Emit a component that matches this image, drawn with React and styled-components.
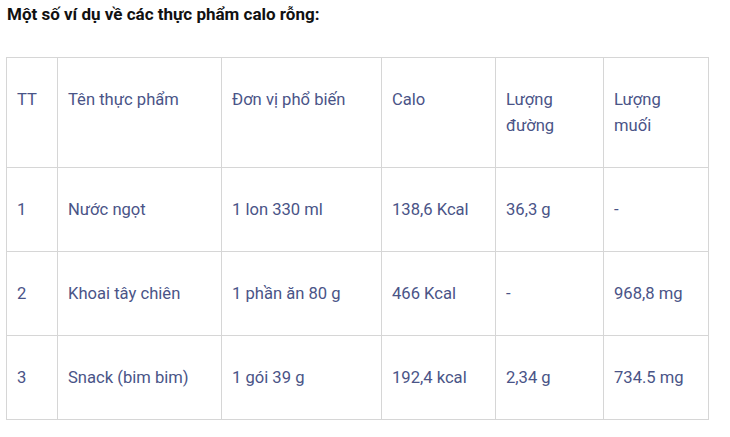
import React from "react";
import styled, { createGlobalStyle } from "styled-components";

const GlobalStyle = createGlobalStyle`
	body {
		margin: 0;
		background: #ffffff;
		font-family: Roboto, "Noto Sans", "Liberation Sans", sans-serif;
	}
`;

const Page = styled.div`
	padding: 2px 6px 0;
`;

const Title = styled.p`
	margin: 0 0 31px 1px;
	font-size: 17px;
	line-height: 24px;
	font-weight: 700;
	color: #111111;
`;

const Table = styled.table`
	width: 702px;
	border-collapse: collapse;
	table-layout: fixed;
	color: #4a5487;
	font-size: 16.6px;
	line-height: 26px;
`;

const Cell = styled.td`
	border: 1px solid #d6d6d6;
	padding: 29px 10px 28px;
	vertical-align: top;
	text-align: left;
	font-weight: 400;
`;

const columns = [51, 164, 160, 114, 108, 105];

const header = ["TT", "Tên thực phẩm", "Đơn vị phổ biến", "Calo", "Lượng đường", "Lượng muối"];

const rows = [
	["1", "Nước ngọt", "1 lon 330 ml", "138,6 Kcal", "36,3 g", "-"],
	["2", "Khoai tây chiên", "1 phần ăn 80 g", "466 Kcal", "-", "968,8 mg"],
	["3", "Snack (bim bim)", "1 gói 39 g", "192,4 kcal", "2,34 g", "734.5 mg"],
];

const App = () => {
	return (
		<Page>
			<GlobalStyle />
			<Title>Một số ví dụ về các thực phẩm calo rỗng:</Title>
			<Table>
				<colgroup>
					{columns.map((w, i) => (
						<col key={i} style={{ width: w }} />
					))}
				</colgroup>
				<tbody>
					<tr>
						{header.map((h) => (
							<Cell key={h}>{h}</Cell>
						))}
					</tr>
					{rows.map((row) => (
						<tr key={row[0]}>
							{row.map((c, i) => (
								<Cell key={i}>{c}</Cell>
							))}
						</tr>
					))}
				</tbody>
			</Table>
		</Page>
	);
};

export default App;
